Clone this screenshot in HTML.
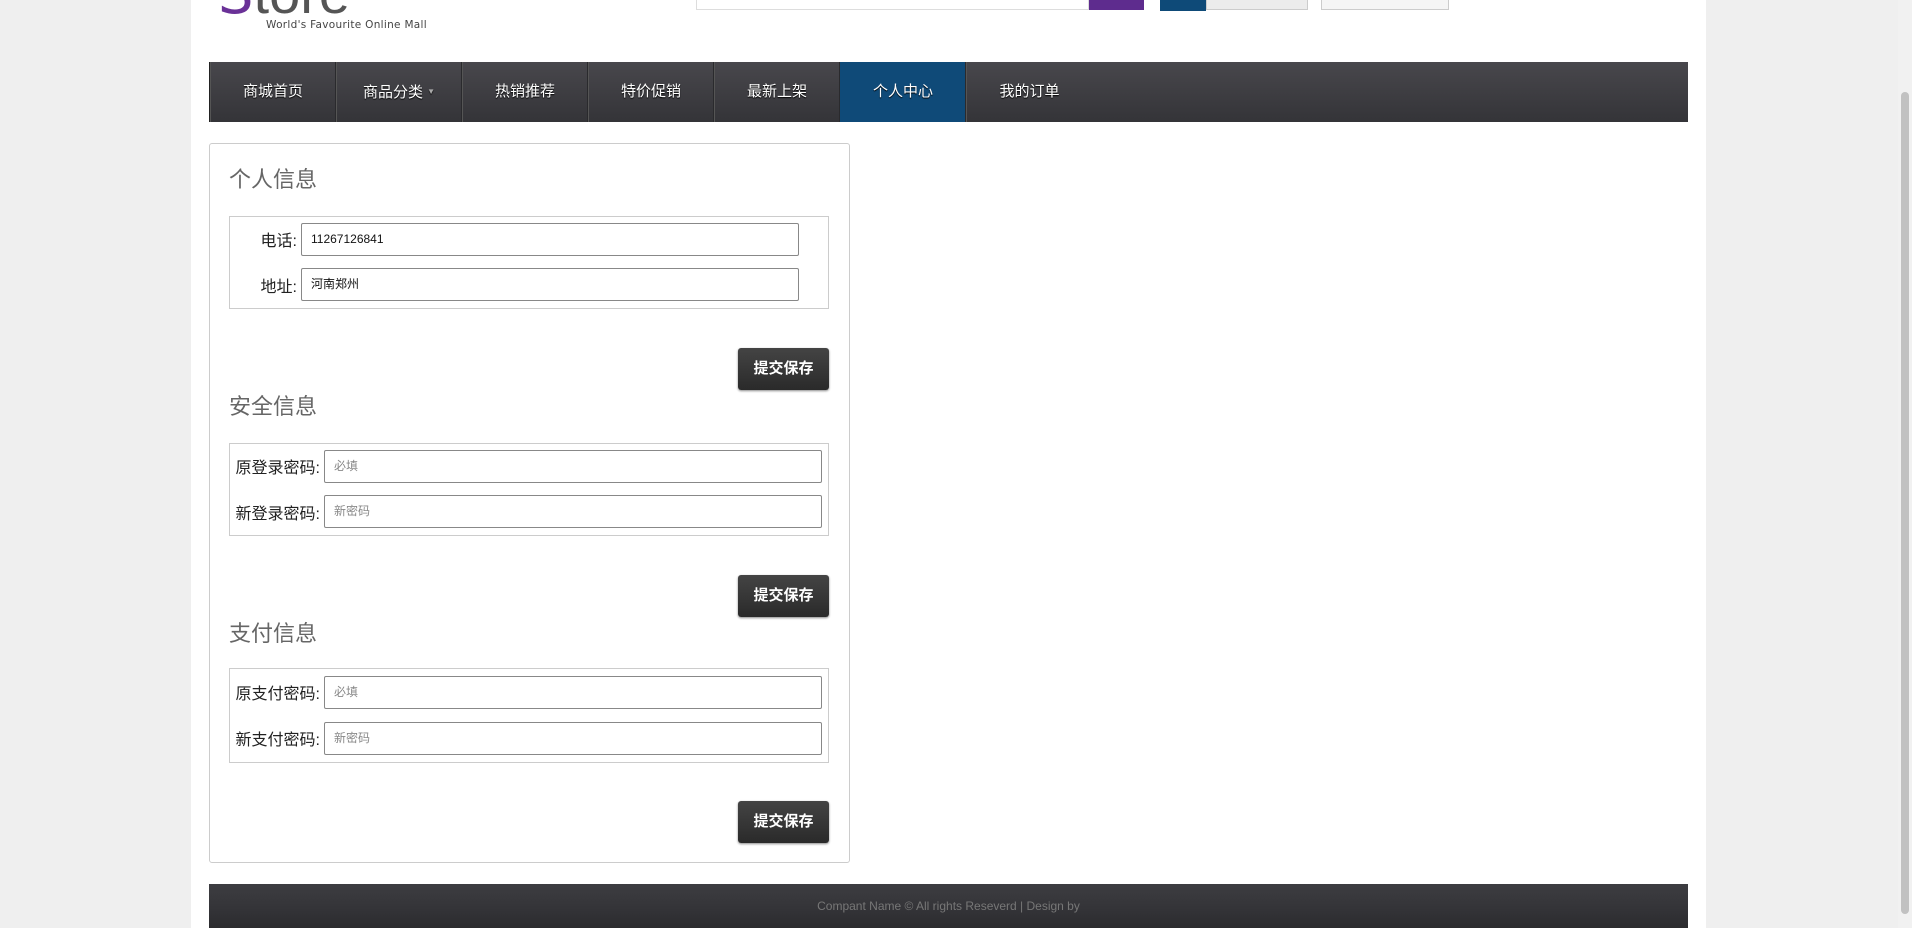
<!DOCTYPE html>
<html><head><meta charset="utf-8"><style>
*{box-sizing:border-box;margin:0;padding:0}
html,body{width:1912px;height:928px;overflow:hidden}
body{background:#efefef;font-family:"Liberation Sans","Noto Sans CJK SC",sans-serif;position:relative}
.wrap{position:absolute;left:191px;top:0;width:1515px;height:928px;background:#fff}
.abs{position:absolute}
.nav{left:209px;top:62px;width:1479px;height:60px;background:linear-gradient(#48474c,#343438);border-left:1px solid #222}
.nav div{position:absolute;top:0;height:60px;width:126px;border-right:1px solid #2a2a2d;border-left:1px solid #555;color:#fff;font-size:15px;line-height:60px;text-align:center;text-shadow:0 1px 1px #000}
.nav div.act{background:#0f4a78;border-left-color:#0f4a78}
.nav div.last{border-right:none}
.panel{left:209px;top:143px;width:641px;height:720px;border:1px solid #ccc;border-radius:3px}
.h{font-size:22px;color:#666;font-weight:normal;left:229px}
.box{left:229px;width:600px;border:1px solid #ccc}
.lab{font-size:16px;color:#222;text-align:right}
.inp{border:1px solid #888;border-radius:2px;height:33px;font-size:12px;line-height:31px;padding-left:9px;color:#111}
.ph{color:#888}
.btn{left:738px;width:91px;height:42px;background:linear-gradient(#444,#2a2a2a);border-radius:3px;color:#fff;font-weight:bold;font-size:15px;line-height:42px;text-align:center;box-shadow:0 1px 2px #888}
.foot{left:209px;top:884px;width:1479px;height:44px;background:linear-gradient(#3d3d41,#333337 60%,#2b2b2e);color:#777;font-size:12px;text-align:center;line-height:44px}
.sb{right:0;top:0;width:14px;height:928px;background:#f1f1f1}
</style></head><body>
<div class="wrap"></div>
<div class="abs" style="left:218px;top:-34px;font-size:56px;color:#6a3197;font-family:'DejaVu Sans',sans-serif;line-height:56px">S<span style="color:#555;font-family:'Liberation Sans Narrow','Liberation Sans',sans-serif;font-weight:300">tore</span></div>
<div class="abs" style="left:266px;top:19px;font-size:10.5px;color:#444;letter-spacing:0.3px;font-family:'DejaVu Sans',sans-serif">World's Favourite Online Mall</div>
<div class="abs" style="left:696px;top:-2px;width:393px;height:12px;border:1px solid #ddd;background:#fff"></div>
<div class="abs" style="left:1089px;top:0;width:55px;height:10px;background:#5e2c8e"></div>
<div class="abs" style="left:1160px;top:0;width:46px;height:11px;background:#0e4a78"></div>
<div class="abs" style="left:1206px;top:-2px;width:102px;height:12px;background:#ececec;border:1px solid #ccc"></div>
<div class="abs" style="left:1321px;top:-2px;width:128px;height:12px;background:#f5f5f5;border:1px solid #ccc"></div>
<div class="abs nav">
<div style="left:0">商城首页</div>
<div style="left:126px">商品分类 <span style="font-size:8px;color:#aaa;vertical-align:3px">▼</span></div>
<div style="left:252px">热销推荐</div>
<div style="left:378px">特价促销</div>
<div style="left:504px">最新上架</div>
<div class="act" style="left:630px">个人中心</div>
<div class="last" style="left:756px">我的订单</div>
</div>
<div class="abs panel"></div>

<div class="abs h" style="top:162px">个人信息</div>
<div class="abs box" style="top:216px;height:93px"></div>
<div class="abs lab" style="left:240px;width:57px;top:227px">电话:</div>
<div class="abs inp" style="left:301px;top:223px;width:498px">11267126841</div>
<div class="abs lab" style="left:240px;width:57px;top:273px">地址:</div>
<div class="abs inp" style="left:301px;top:268px;width:498px">河南郑州</div>
<div class="abs btn" style="top:348px">提交保存</div>

<div class="abs h" style="top:389px">安全信息</div>
<div class="abs box" style="top:443px;height:93px"></div>
<div class="abs lab" style="left:232px;width:88px;top:454px">原登录密码:</div>
<div class="abs inp ph" style="left:324px;top:450px;width:498px">必填</div>
<div class="abs lab" style="left:232px;width:88px;top:500px">新登录密码:</div>
<div class="abs inp ph" style="left:324px;top:495px;width:498px">新密码</div>
<div class="abs btn" style="top:575px">提交保存</div>

<div class="abs h" style="top:616px">支付信息</div>
<div class="abs box" style="top:668px;height:95px"></div>
<div class="abs lab" style="left:232px;width:88px;top:680px">原支付密码:</div>
<div class="abs inp ph" style="left:324px;top:676px;width:498px">必填</div>
<div class="abs lab" style="left:232px;width:88px;top:726px">新支付密码:</div>
<div class="abs inp ph" style="left:324px;top:722px;width:498px">新密码</div>
<div class="abs btn" style="top:801px">提交保存</div>

<div class="abs foot">Compant Name © All rights Reseverd | Design by</div>
<div class="abs sb"><div style="position:absolute;left:3px;top:92px;width:8px;height:822px;background:#c1c1c1;border-radius:4px"></div></div>
</body></html>
